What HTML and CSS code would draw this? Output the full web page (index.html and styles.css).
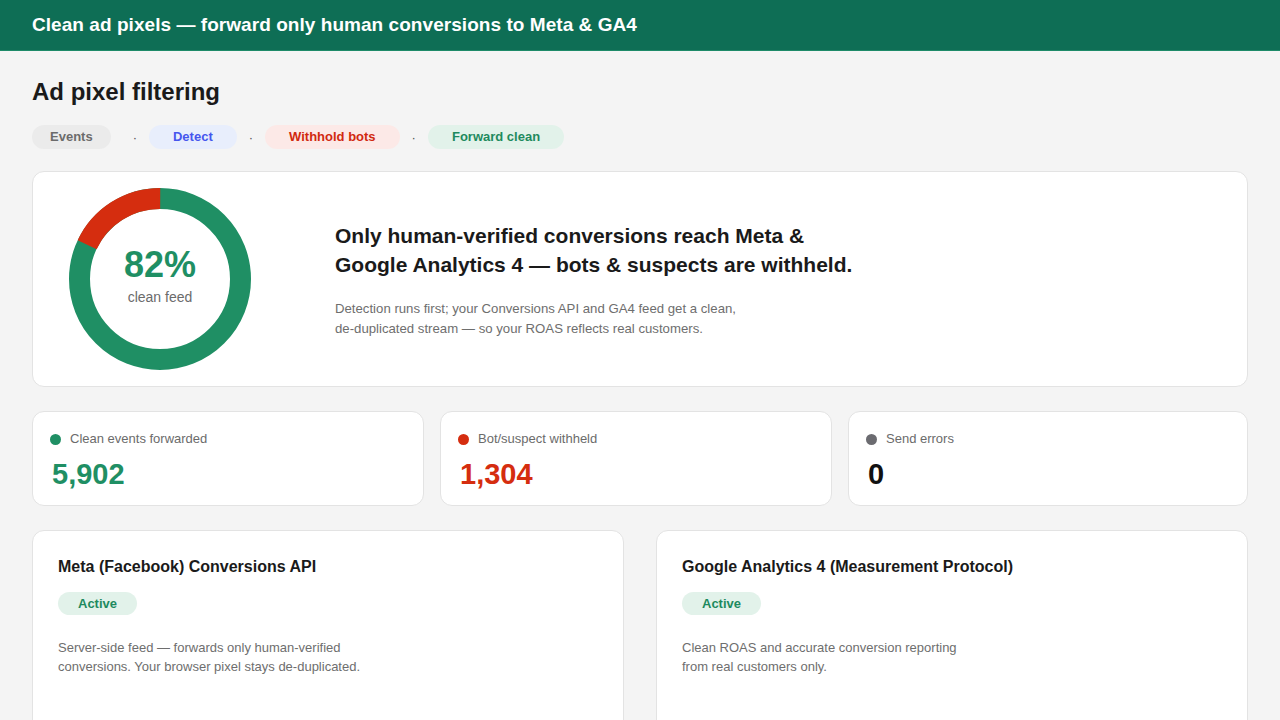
FILE: index.html
```html
<!DOCTYPE html>
<html lang="en">
<head>
  <meta charset="UTF-8">
  <title>Ad pixel filtering</title>
  <link rel="stylesheet" href="styles.css">
</head>
<body>
  <header class="topbar">
    <h1 class="topbar-title">Clean ad pixels — forward only human conversions to Meta &amp; GA4</h1>
  </header>

  <main class="page">
    <h2 class="page-title">Ad pixel filtering</h2>

    <div class="flow">
      <span class="pill pill-events">Events</span>
      <span class="flow-dot">·</span>
      <span class="pill pill-detect">Detect</span>
      <span class="flow-dot">·</span>
      <span class="pill pill-withhold">Withhold bots</span>
      <span class="flow-dot">·</span>
      <span class="pill pill-forward">Forward clean</span>
    </div>

    <section class="card hero">
      <div class="donut">
        <svg width="182" height="182" viewBox="0 0 182 182">
          <circle cx="91" cy="91" r="80.5" fill="none" stroke="#1f8f64" stroke-width="21"/>
          <!-- 18% bot share, drawn back from 12 o'clock -->
          <circle cx="91" cy="91" r="80.5" fill="none" stroke="#d52d0f" stroke-width="21"
                  stroke-dasharray="91.05 505.8" transform="rotate(-154.8 91 91)"/>
        </svg>
        <div class="donut-label">
          <div class="donut-value">82%</div>
          <div class="donut-caption">clean feed</div>
        </div>
      </div>
      <div class="hero-text">
        <h3 class="hero-heading">Only human-verified conversions reach Meta &amp; Google Analytics 4 — bots &amp; suspects are withheld.</h3>
        <p class="hero-desc">Detection runs first; your Conversions API and GA4 feed get a clean, de-duplicated stream — so your ROAS reflects real customers.</p>
      </div>
    </section>

    <section class="stats">
      <div class="card stat">
        <div class="stat-label"><span class="dot dot-green"></span>Clean events forwarded</div>
        <div class="stat-value green">5,902</div>
      </div>
      <div class="card stat">
        <div class="stat-label"><span class="dot dot-red"></span>Bot/suspect withheld</div>
        <div class="stat-value red">1,304</div>
      </div>
      <div class="card stat">
        <div class="stat-label"><span class="dot dot-gray"></span>Send errors</div>
        <div class="stat-value">0</div>
      </div>
    </section>

    <section class="destinations">
      <div class="card dest">
        <h4 class="dest-title">Meta (Facebook) Conversions API</h4>
        <span class="badge">Active</span>
        <p class="dest-desc">Server-side feed — forwards only human-verified conversions. Your browser pixel stays de-duplicated.</p>
      </div>
      <div class="card dest">
        <h4 class="dest-title">Google Analytics 4 (Measurement Protocol)</h4>
        <span class="badge">Active</span>
        <p class="dest-desc">Clean ROAS and accurate conversion reporting from real customers only.</p>
      </div>
    </section>
  </main>
</body>
</html>
```

FILE: styles.css
```css
body {
  margin: 0;
  font-family: "Liberation Sans", Arial, sans-serif;
  background-color: #f4f4f4;
  color: #1a1a1a;
}

/* barra do topo */
.topbar {
  background-color: #0e6e55;
  height: 50px;
  border-bottom: 1px solid #1d8a68;
  display: flex;
  align-items: center;
  padding: 0 32px;
}

.topbar-title {
  margin: 0;
  color: #fff;
  font-size: 19px;
  font-weight: bold;
  letter-spacing: 0.05px;
}

.page {
  padding: 26px 32px 24px 32px;
}

.page-title {
  margin: 0;
  font-size: 24px;
  line-height: 30px;
}

.flow {
  display: flex;
  align-items: center;
  gap: 12px;
  margin-top: 18px;
}

.flow-dot {
  color: #555;
  font-size: 13px;
}

.pill {
  height: 24px;
  line-height: 24px;
  border-radius: 12px;
  padding: 0 24px;
  font-size: 13px;
  font-weight: bold;
}

.pill-events {
  background-color: #ebebeb;
  color: #6b6b6b;
  padding: 0 18px;
  margin-right: 10px;
}

.pill-detect {
  background-color: #e8eefc;
  color: #4556ee;
}

.pill-withhold {
  background-color: #fce9e7;
  color: #d12a10;
}

.pill-forward {
  background-color: #e2f2ea;
  color: #1e8a5e;
}

.card {
  background-color: #fff;
  border: 1px solid #e3e3e3;
  border-radius: 12px;
}

.hero {
  margin-top: 22px;
  display: flex;
  align-items: center;
  gap: 84px;
  padding: 16px 36px;
}

.donut {
  position: relative;
  width: 182px;
  height: 182px;
  flex-shrink: 0;
}

.donut svg {
  display: block;
}

.donut-label {
  position: absolute;
  inset: 0;
  display: flex;
  flex-direction: column;
  align-items: center;
  justify-content: center;
  padding-bottom: 8px;
  box-sizing: border-box;
}

.donut-value {
  color: #1f8f64;
  font-size: 36px;
  font-weight: bold;
  line-height: 40px;
}

.donut-caption {
  color: #6b6b6b;
  font-size: 14px;
  line-height: 18px;
  margin-top: 3px;
}

.hero-text {
  padding-top: 2px;
}

.hero-heading {
  margin: 0;
  font-size: 21px;
  line-height: 29px;
  max-width: 530px;
}

.hero-desc {
  margin: 20px 0 0 0;
  color: #6e6e6e;
  font-size: 13.2px;
  line-height: 20px;
  max-width: 410px;
}

.stats {
  margin-top: 24px;
  display: grid;
  grid-template-columns: 392px 392px 1fr;
  gap: 16px;
}

.stat {
  padding: 18px 20px 14px 16px;
}

.stat-label {
  display: flex;
  align-items: center;
  gap: 9px;
  font-size: 13px;
  line-height: 18px;
  color: #6b6b6b;
}

.dot {
  width: 11px;
  height: 11px;
  border-radius: 50%;
  margin-left: 1px;
}

.dot-green { background-color: #1f8f64; }
.dot-red { background-color: #d52d0f; }
.dot-gray { background-color: #6b6b70; }

.stat-value {
  margin-top: 9px;
  margin-left: 3px;
  font-size: 29px;
  font-weight: bold;
  line-height: 34px;
  color: #111;
}

.stat-value.green { color: #1f8f64; }
.stat-value.red { color: #d52d0f; }

.destinations {
  margin-top: 24px;
  display: grid;
  grid-template-columns: 1fr 1fr;
  gap: 32px;
}

.dest {
  padding: 26px 25px 56px 25px;
}

.dest-title {
  margin: 0;
  font-size: 16px;
  line-height: 20px;
}

.badge {
  display: inline-block;
  margin-top: 15px;
  height: 23px;
  line-height: 23px;
  padding: 0 20px;
  border-radius: 12px;
  background-color: #e2f2ea;
  color: #1e8a5e;
  font-size: 13px;
  font-weight: bold;
}

.dest-desc {
  margin: 23px 0 0 0;
  max-width: 303px;
  color: #6e6e6e;
  font-size: 13px;
  line-height: 19px;
}
```
